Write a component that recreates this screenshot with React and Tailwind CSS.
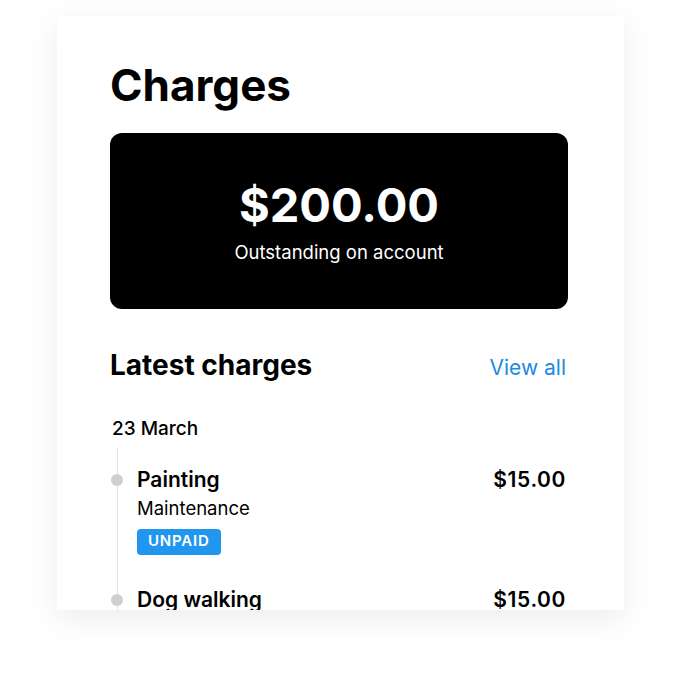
export default function App() {
  const charges = [
    { name: 'Painting', category: 'Maintenance', amount: '$15.00', status: 'UNPAID' },
    { name: 'Dog walking', amount: '$15.00' },
  ];

  return (
    <div className="min-h-[682px] bg-white pt-[16px] pl-[57px]" style={{ fontFamily: 'Inter, "Noto Sans", sans-serif' }}>
      <div className="w-[567px] h-[594px] overflow-hidden bg-white shadow-[0_8px_30px_rgba(0,0,0,0.08)] pt-[47px] pl-[53px] pr-[56px]">
        <h1 className="text-[44px] leading-none font-bold text-black">Charges</h1>

        {/* Balance */}
        <div className="mt-[26px] h-[176px] rounded-xl bg-black flex flex-col items-center justify-center text-white">
          <p className="text-[47px] leading-none font-bold">$200.00</p>
          <p className="mt-[15px] text-[18.5px] leading-none">Outstanding on account</p>
        </div>

        {/* Latest charges */}
        <div className="mt-[42px] flex items-baseline justify-between">
          <h2 className="text-[28px] leading-none font-bold text-black">Latest charges</h2>
          <a className="text-[21px] leading-none text-[#1d8ae4] mr-[2px]">View all</a>
        </div>

        <p className="mt-[40px] ml-[2px] text-[19px] leading-none font-medium text-black">23 March</p>

        <div className="mt-[10px] ml-[7px] border-l border-[#e4e4e4] pl-[19px] pt-[21px] pb-[40px]">
          {charges.map((c, i) => (
            <div key={c.name} className={`relative ${i > 0 ? 'mt-[34px]' : ''}`}>
              <span className="absolute -left-[26px] top-[5px] w-3 h-3 rounded-full bg-[#cfcfd3]"></span>
              <div className="flex items-baseline justify-between">
                <p className="text-[21px] leading-none font-semibold text-black">{c.name}</p>
                <p className="text-[21px] leading-none font-semibold text-black tracking-[0.6px] mr-[2px]">{c.amount}</p>
              </div>
              {c.category && <p className="mt-[9px] text-[18.5px] leading-none text-black">{c.category}</p>}
              {c.status && (
                <span className="mt-[11px] inline-flex items-center h-[26px] px-[11px] rounded-[4px] bg-[#2196ee] text-white text-[15px] font-semibold tracking-[0.8px]">
                  {c.status}
                </span>
              )}
            </div>
          ))}
        </div>
      </div>
    </div>
  );
}
